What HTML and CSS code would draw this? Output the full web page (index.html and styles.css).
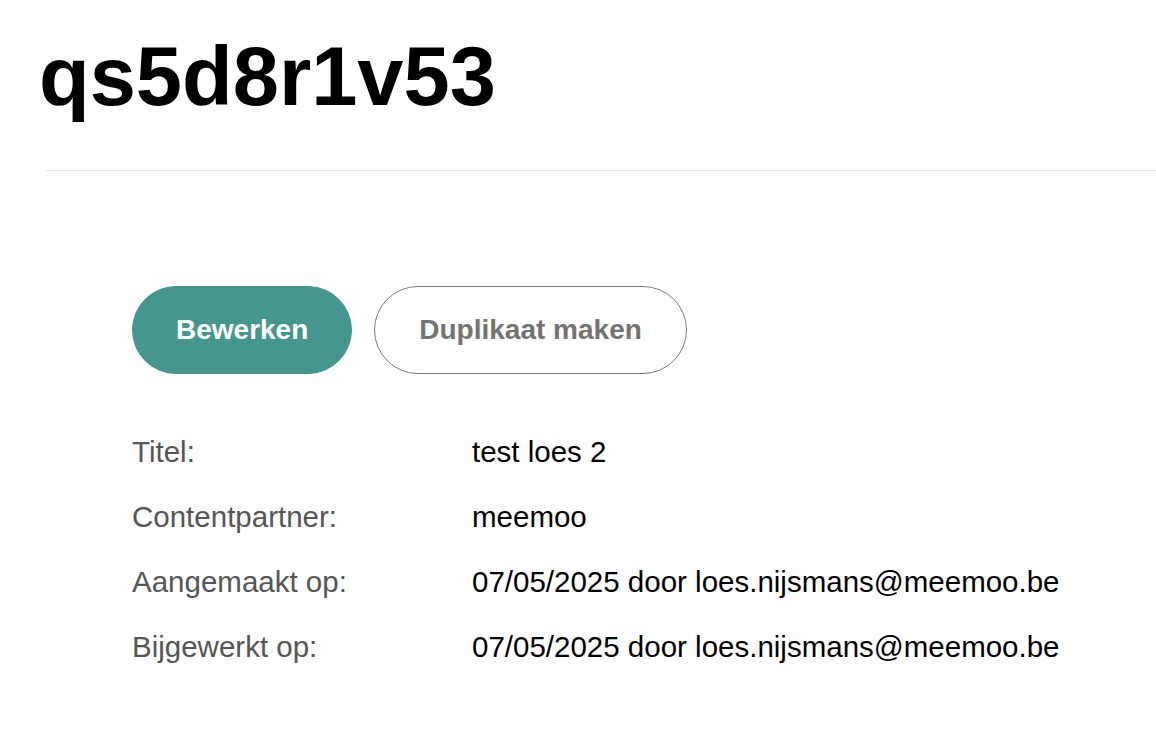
FILE: index.html
```html
<!DOCTYPE html>
<html lang="nl">
<head>
<meta charset="utf-8">
<title>qs5d8r1v53</title>
<link rel="stylesheet" href="styles.css">
</head>
<body>
<header class="page-header">
  <h1 class="page-title">qs5d8r1v53</h1>
</header>
<hr class="divider">
<main class="content">
  <div class="actions">
    <button class="btn btn-primary" type="button">Bewerken</button>
    <button class="btn btn-outline" type="button">Duplikaat maken</button>
  </div>
  <dl class="details">
    <dt>Titel:</dt><dd>test loes 2</dd>
    <dt>Contentpartner:</dt><dd>meemoo</dd>
    <dt>Aangemaakt op:</dt><dd>07/05/2025 door loes.nijsmans@meemoo.be</dd>
    <dt>Bijgewerkt op:</dt><dd>07/05/2025 door loes.nijsmans@meemoo.be</dd>
  </dl>
</main>
</body>
</html>
```

FILE: styles.css
```css
html, body {
  margin: 0;
  padding: 0;
  background: #ffffff;
}
body {
  font-family: "Liberation Sans", Arial, sans-serif;
  color: #000;
}
.page-header {
  padding: 35px 0 0 39px;
}
.page-title {
  margin: 0;
  font-size: 83px;
  line-height: 83px;
  font-weight: 700;
  letter-spacing: 0;
}
.divider {
  margin: 52px 0 0 46px;
  border: 0;
  border-top: 1px solid #e6e6e6;
  height: 0;
}
.content {
  padding: 115px 0 0 132px;
}
.actions {
  display: flex;
  gap: 22px;
}
.btn {
  height: 88px;
  padding: 0 43px;
  border-radius: 44px;
  font-family: "Liberation Sans", Arial, sans-serif;
  font-weight: 700;
  font-size: 28px;
  cursor: pointer;
}
.btn-primary {
  background: #45968e;
  color: #ffffff;
  border: 1px solid #45968e;
}
.btn-outline {
  padding: 0 44px;
  background: #ffffff;
  color: #737373;
  border: 1px solid #7a7a7a;
}
.details {
  margin: 45px 0 0 0;
  display: grid;
  grid-template-columns: 340px auto;
  grid-auto-rows: 65px;
  font-size: 29.5px;
  line-height: 65px;
}
.details dt {
  color: #555555;
}
.details dd {
  margin: 0;
  color: #000000;
}
```
